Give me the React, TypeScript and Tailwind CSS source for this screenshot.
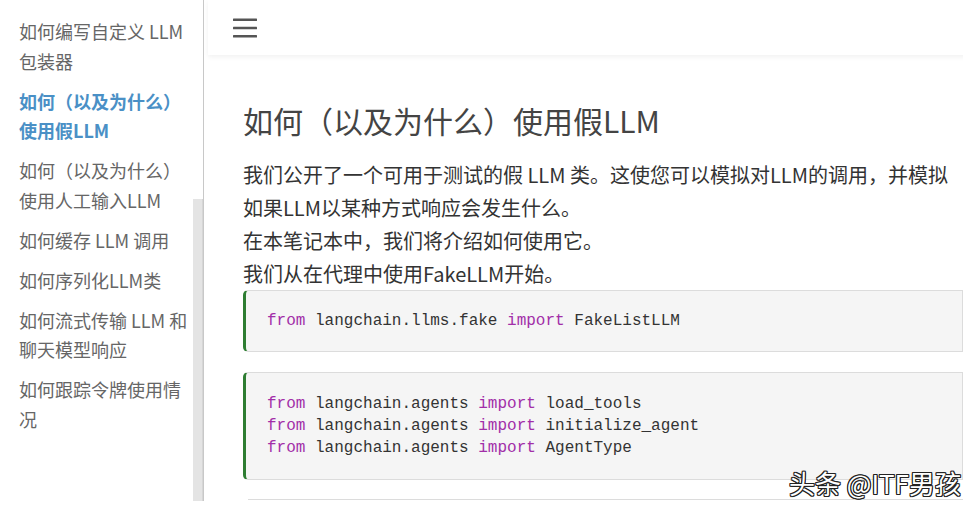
import React from "react";

const cjk = { fontFamily: '"Noto Sans CJK SC", "Noto Sans", sans-serif' };
const mono = { fontFamily: '"Liberation Mono", "DejaVu Sans Mono", monospace' };

const items: { text: string; active?: boolean }[] = [
  { text: "如何编写自定义 LLM 包装器" },
  { text: "如何（以及为什么）使用假LLM", active: true },
  { text: "如何（以及为什么）使用人工输入LLM" },
  { text: "如何缓存 LLM 调用" },
  { text: "如何序列化LLM类" },
  { text: "如何流式传输 LLM 和聊天模型响应" },
  { text: "如何跟踪令牌使用情况" },
];

function Kw({ children }: { children: React.ReactNode }) {
  return <span className="text-[#a22ea8]">{children}</span>;
}

function Line({ mod, name }: { mod: string; name: string }) {
  return (
    <div className="whitespace-pre">
      <Kw>from</Kw> {mod} <Kw>import</Kw> {name}
    </div>
  );
}

export default function App() {
  return (
    <div className="relative w-[979px] h-[515px] bg-white overflow-hidden" style={cjk}>
      <div className="flex h-[501px] overflow-hidden">
        <aside className="relative w-[203px] shrink-0 pl-[19px] pt-[17px]">
          <div className="flex flex-col gap-[10.5px] w-[172px]">
            {items.map((it) => (
              <div
                key={it.text}
                className={
                  it.active
                    ? "text-[18px] leading-[29.5px] font-bold text-[#4a90c6]"
                    : "text-[18px] leading-[29.5px] text-[#666666]"
                }
              >
                {it.text}
              </div>
            ))}
          </div>
          <div className="absolute right-0 top-[199px] bottom-0 w-[10px] bg-[#e4e4e4] border-r border-[#d6d6d6]" />
        </aside>
        <div className="w-px shrink-0 bg-[#c8c8c8]" />
        <main className="w-[775px] shrink-0 flex flex-col">
          <header className="ml-[4px] h-[55px] shrink-0 bg-white shadow-[0_2px_5px_rgba(0,0,0,0.06)] flex items-center pl-[25px]">
            <svg width="24" height="22" viewBox="0 0 24 22">
              <rect x="0" y="1.5" width="24" height="2.6" rx="0.5" fill="#555" />
              <rect x="0" y="9.7" width="24" height="2.6" rx="0.5" fill="#555" />
              <rect x="0" y="18" width="24" height="2.6" rx="0.5" fill="#555" />
            </svg>
          </header>
          <div className="flex">
            <div className="pl-[39px] pt-[47px] w-[759px] shrink-0">
              <h1 className="text-[30px] leading-[36px] text-[#444444] font-normal">
                如何（以及为什么）使用假LLM
              </h1>
              <div className="mt-[20px] text-[20px] leading-[33px] text-[#333333]">
                <p>我们公开了一个可用于测试的假 LLM 类。这使您可以模拟对LLM的调用，并模拟如果LLM以某种方式响应会发生什么。</p>
                <p>在本笔记本中，我们将介绍如何使用它。</p>
                <p>我们从在代理中使用FakeLLM开始。</p>
              </div>
              <div
                className="bg-[#f5f5f5] border border-l-[3px] border-[#dcdcdc] border-l-[#2e7d32] rounded-l-[5px] pl-[21px] pt-[19px] pb-[19px] text-[16px] leading-[22px] text-[#333333]"
                style={mono}
              >
                <Line mod="langchain.llms.fake" name="FakeListLLM" />
              </div>
              <div
                className="mt-[20px] bg-[#f5f5f5] border border-l-[3px] border-[#dcdcdc] border-l-[#2e7d32] rounded-l-[5px] pl-[21px] pt-[20px] pb-[20px] text-[16px] leading-[22px] text-[#333333]"
                style={mono}
              >
                <Line mod="langchain.agents" name="load_tools" />
                <Line mod="langchain.agents" name="initialize_agent" />
                <Line mod="langchain.agents" name="AgentType" />
              </div>
              <div className="mt-[19px] ml-[5px] h-[40px] border-t-[3px] border-double border-[#dcdcdc] bg-white" />
            </div>
            <div className="w-[16px] shrink-0 bg-white" />
          </div>
        </main>
      </div>
      <div
        className="absolute left-[789px] top-[467px] text-[26px] leading-[32px] text-white whitespace-nowrap"
        style={{
          ...cjk,
          textShadow:
            "1px 1px 0 #222, -1px -1px 0 #222, 1px -1px 0 #222, -1px 1px 0 #222, 1px 0 0 #222, -1px 0 0 #222, 0 1px 0 #222, 0 -1px 0 #222",
        }}
      >
        头条 @ITF男孩
      </div>
    </div>
  );
}
